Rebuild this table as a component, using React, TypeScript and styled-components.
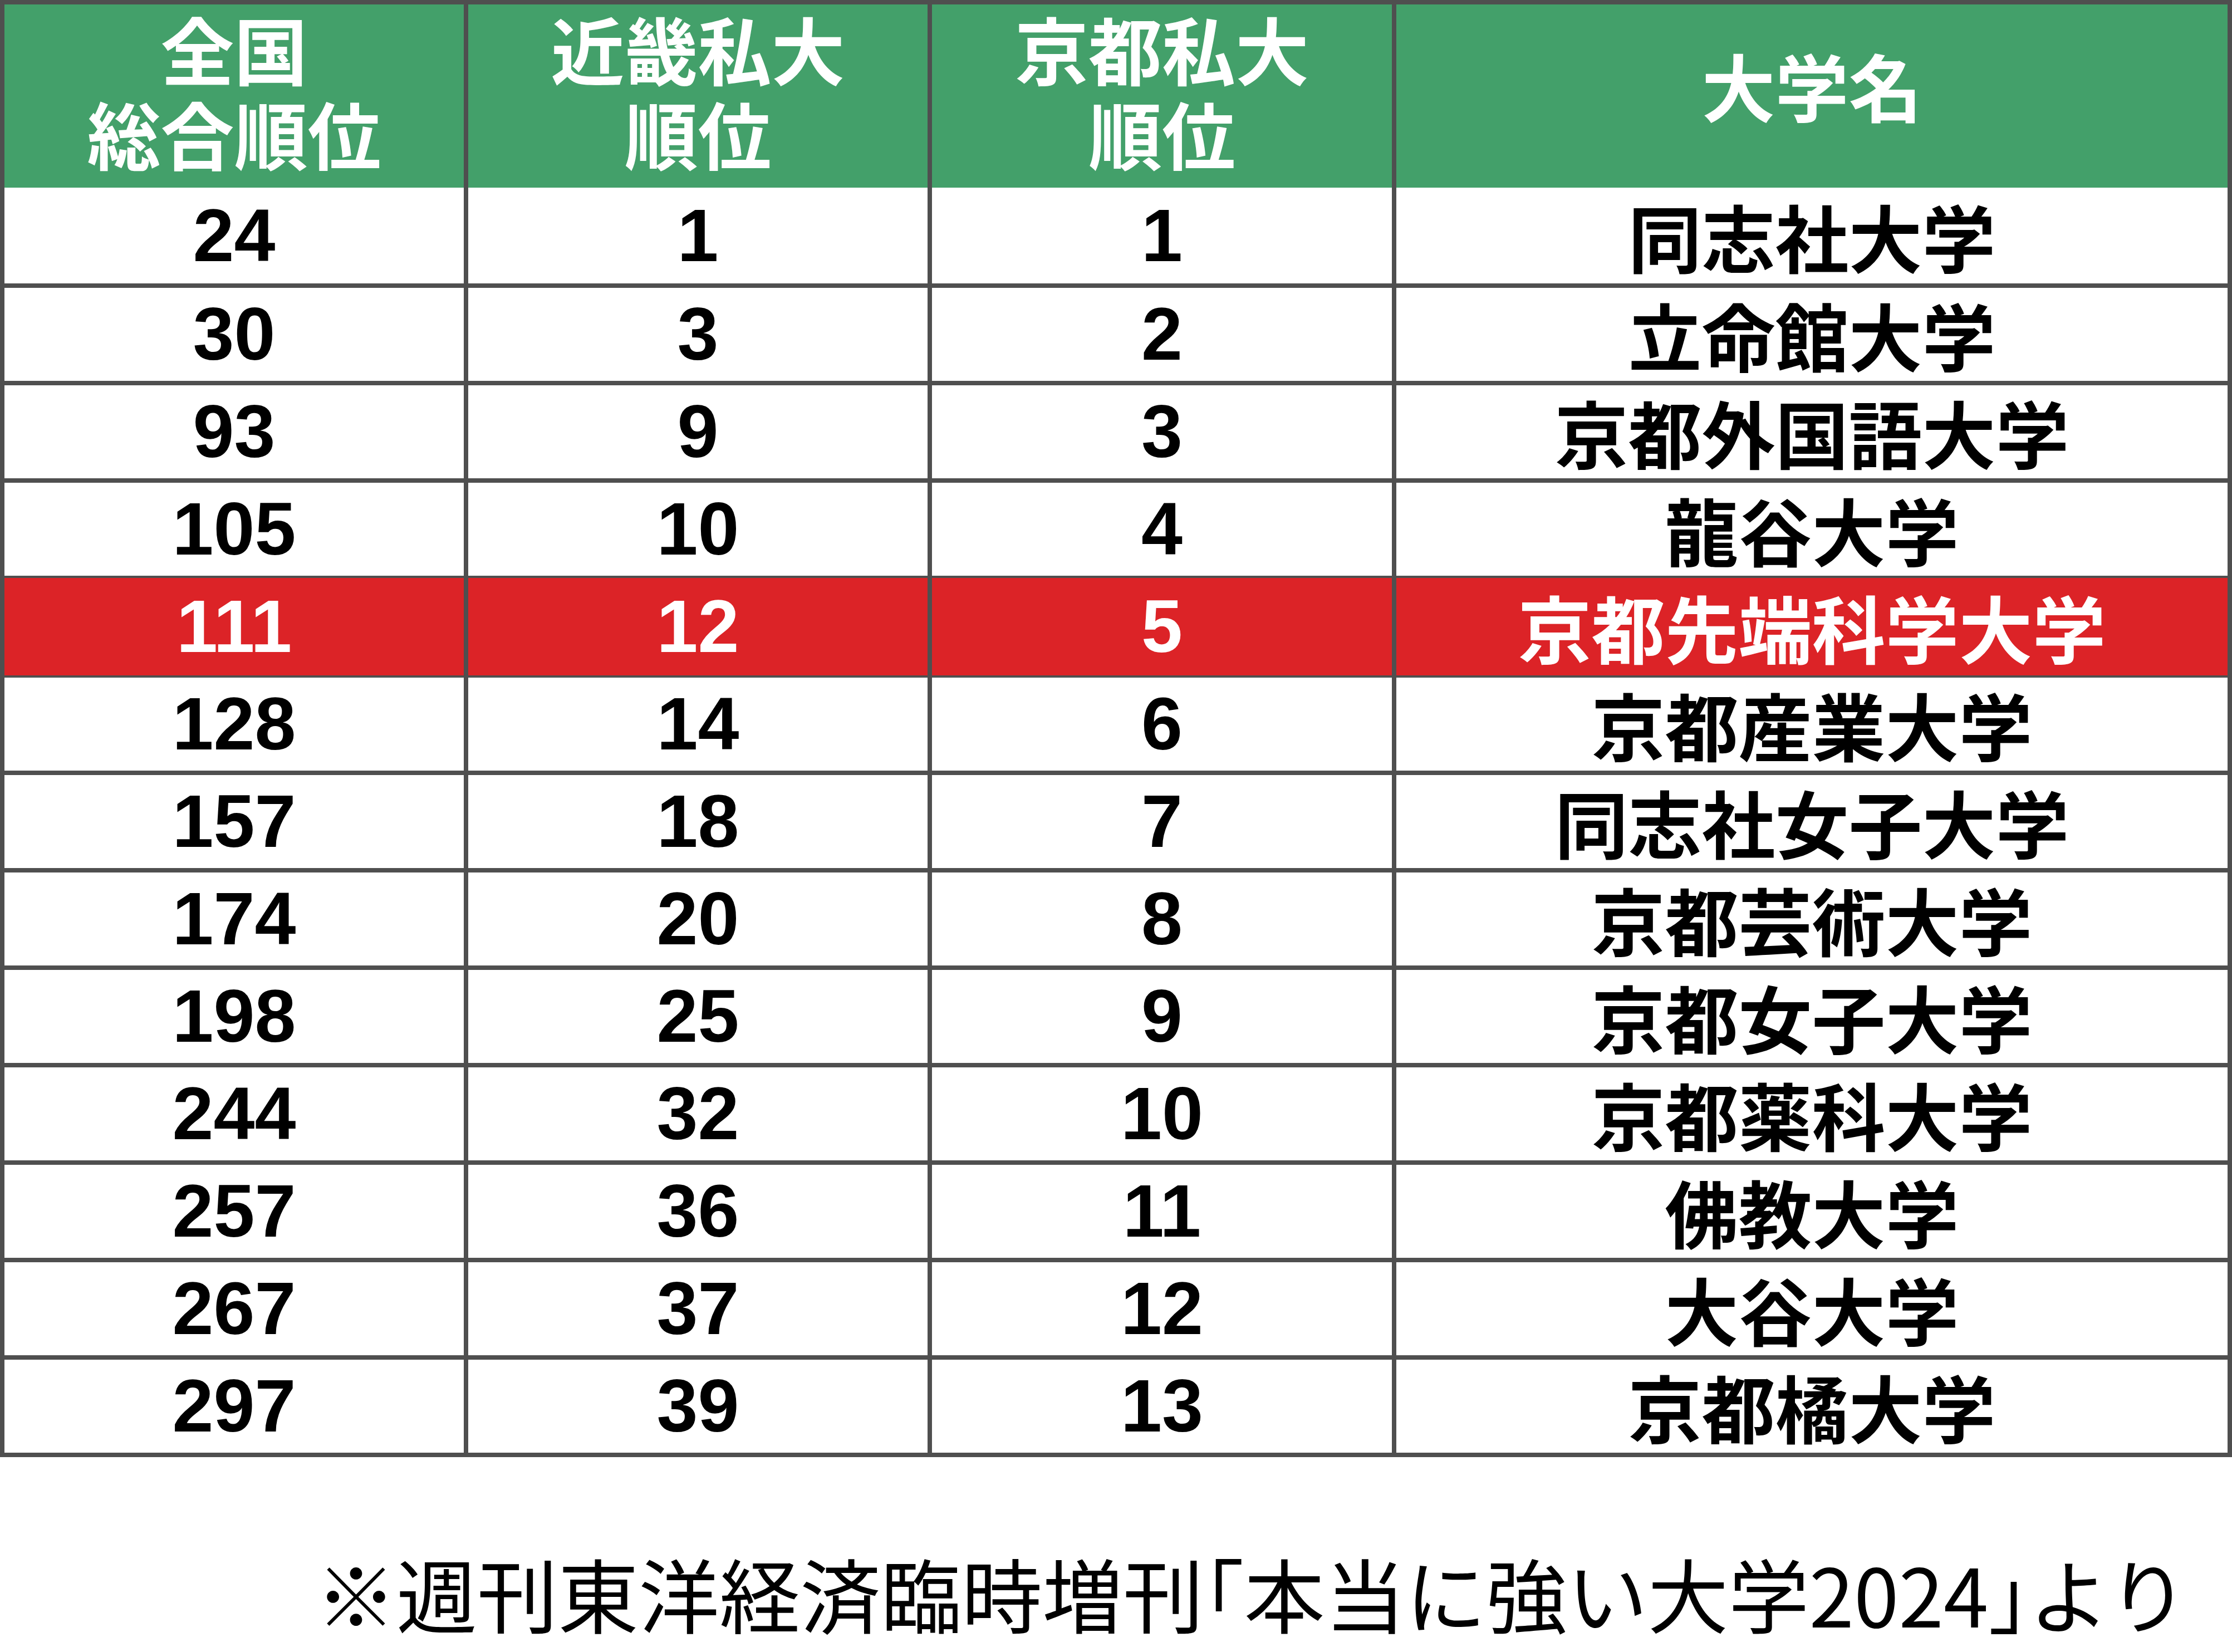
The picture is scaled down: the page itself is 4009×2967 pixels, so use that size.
import styled, { createGlobalStyle } from "styled-components";

type RankRow = {
  national: number;
  kinki: number;
  kyoto: number;
  name: string;
  highlight?: boolean;
};

const rows: RankRow[] = [
  { national: 24, kinki: 1, kyoto: 1, name: "同志社大学" },
  { national: 30, kinki: 3, kyoto: 2, name: "立命館大学" },
  { national: 93, kinki: 9, kyoto: 3, name: "京都外国語大学" },
  { national: 105, kinki: 10, kyoto: 4, name: "龍谷大学" },
  { national: 111, kinki: 12, kyoto: 5, name: "京都先端科学大学", highlight: true },
  { national: 128, kinki: 14, kyoto: 6, name: "京都産業大学" },
  { national: 157, kinki: 18, kyoto: 7, name: "同志社女子大学" },
  { national: 174, kinki: 20, kyoto: 8, name: "京都芸術大学" },
  { national: 198, kinki: 25, kyoto: 9, name: "京都女子大学" },
  { national: 244, kinki: 32, kyoto: 10, name: "京都薬科大学" },
  { national: 257, kinki: 36, kyoto: 11, name: "佛教大学" },
  { national: 267, kinki: 37, kyoto: 12, name: "大谷大学" },
  { national: 297, kinki: 39, kyoto: 13, name: "京都橘大学" },
];

const GlobalStyle = createGlobalStyle`
  html, body {
    margin: 0;
    padding: 0;
    background: #ffffff;
  }
  body {
    width: 4009px;
    height: 2967px;
    overflow: hidden;
    font-family: "Noto Sans CJK JP", "Noto Sans", sans-serif;
  }
`;

const Page = styled.div`
  width: 4009px;
  height: 2967px;
  display: flex;
  flex-direction: column;
  background: #ffffff;
`;

const Table = styled.div`
  border: 8px solid #4f4f4f;
  background: #4f4f4f;
  display: flex;
  flex-direction: column;
`;

const columns = "825px 825px 826px 1493px";

const HeaderRow = styled.div`
  display: grid;
  grid-template-columns: ${columns};
  column-gap: 8px;
  height: 329px;
`;

const HeaderCell = styled.div<{ $lift?: number }>`
  background: #43a06a;
  color: #ffffff;
  display: flex;
  align-items: center;
  justify-content: center;
  text-align: center;
  padding-bottom: ${(p) => p.$lift ?? 22}px;
  font-family: "Noto Sans CJK JP", sans-serif;
  font-weight: 700;
  font-size: 132px;
  line-height: 152px;
  white-space: nowrap;
`;

const Body = styled.div`
  display: flex;
  flex-direction: column;
  row-gap: 8px;
`;

const Row = styled.div`
  display: grid;
  grid-template-columns: ${columns};
  column-gap: 8px;
  height: 167px;

  &:first-child {
    height: 172px;
  }
`;

const Cell = styled.div<{ $highlight?: boolean }>`
  background: ${(p) => (p.$highlight ? "#dc2327" : "#ffffff")};
  color: ${(p) => (p.$highlight ? "#ffffff" : "#000000")};
  margin: ${(p) => (p.$highlight ? "-4px 0" : "0")};
  display: flex;
  align-items: center;
  justify-content: center;
  white-space: nowrap;
`;

const Num = styled.span`
  font-family: "Liberation Sans", Arial, sans-serif;
  font-weight: 700;
  font-size: 133px;
  line-height: 1;
  font-kerning: normal;
`;

const Name = styled.span`
  font-family: "Noto Sans CJK JP", sans-serif;
  font-weight: 700;
  font-size: 132px;
  line-height: 1.2;
`;

const Note = styled.p`
  margin: 0;
  padding: 143px 78px 0 0;
  text-align: right;
  font-family: "Noto Sans CJK JP", sans-serif;
  font-weight: 400;
  font-size: 145px;
  line-height: 200px;
  color: #000000;
  white-space: nowrap;
`;

const Bracket = styled.span`
  font-feature-settings: "halt" 1;
`;

export default function App() {
  return (
    <>
      <GlobalStyle />
      <Page>
        <Table>
          <HeaderRow>
            <HeaderCell>
              全国
              <br />
              総合順位
            </HeaderCell>
            <HeaderCell>
              近畿私大
              <br />
              順位
            </HeaderCell>
            <HeaderCell>
              京都私大
              <br />
              順位
            </HeaderCell>
            <HeaderCell $lift={42}>大学名</HeaderCell>
          </HeaderRow>
          <Body>
            {rows.map((r) => (
              <Row key={r.name}>
                <Cell $highlight={r.highlight}>
                  <Num>{r.national}</Num>
                </Cell>
                <Cell $highlight={r.highlight}>
                  <Num>{r.kinki}</Num>
                </Cell>
                <Cell $highlight={r.highlight}>
                  <Num>{r.kyoto}</Num>
                </Cell>
                <Cell $highlight={r.highlight}>
                  <Name>{r.name}</Name>
                </Cell>
              </Row>
            ))}
          </Body>
        </Table>
        <Note>
          ※週刊東洋経済臨時増刊<Bracket>「</Bracket>本当に強い大学2024<Bracket>」</Bracket>より
        </Note>
      </Page>
    </>
  );
}
